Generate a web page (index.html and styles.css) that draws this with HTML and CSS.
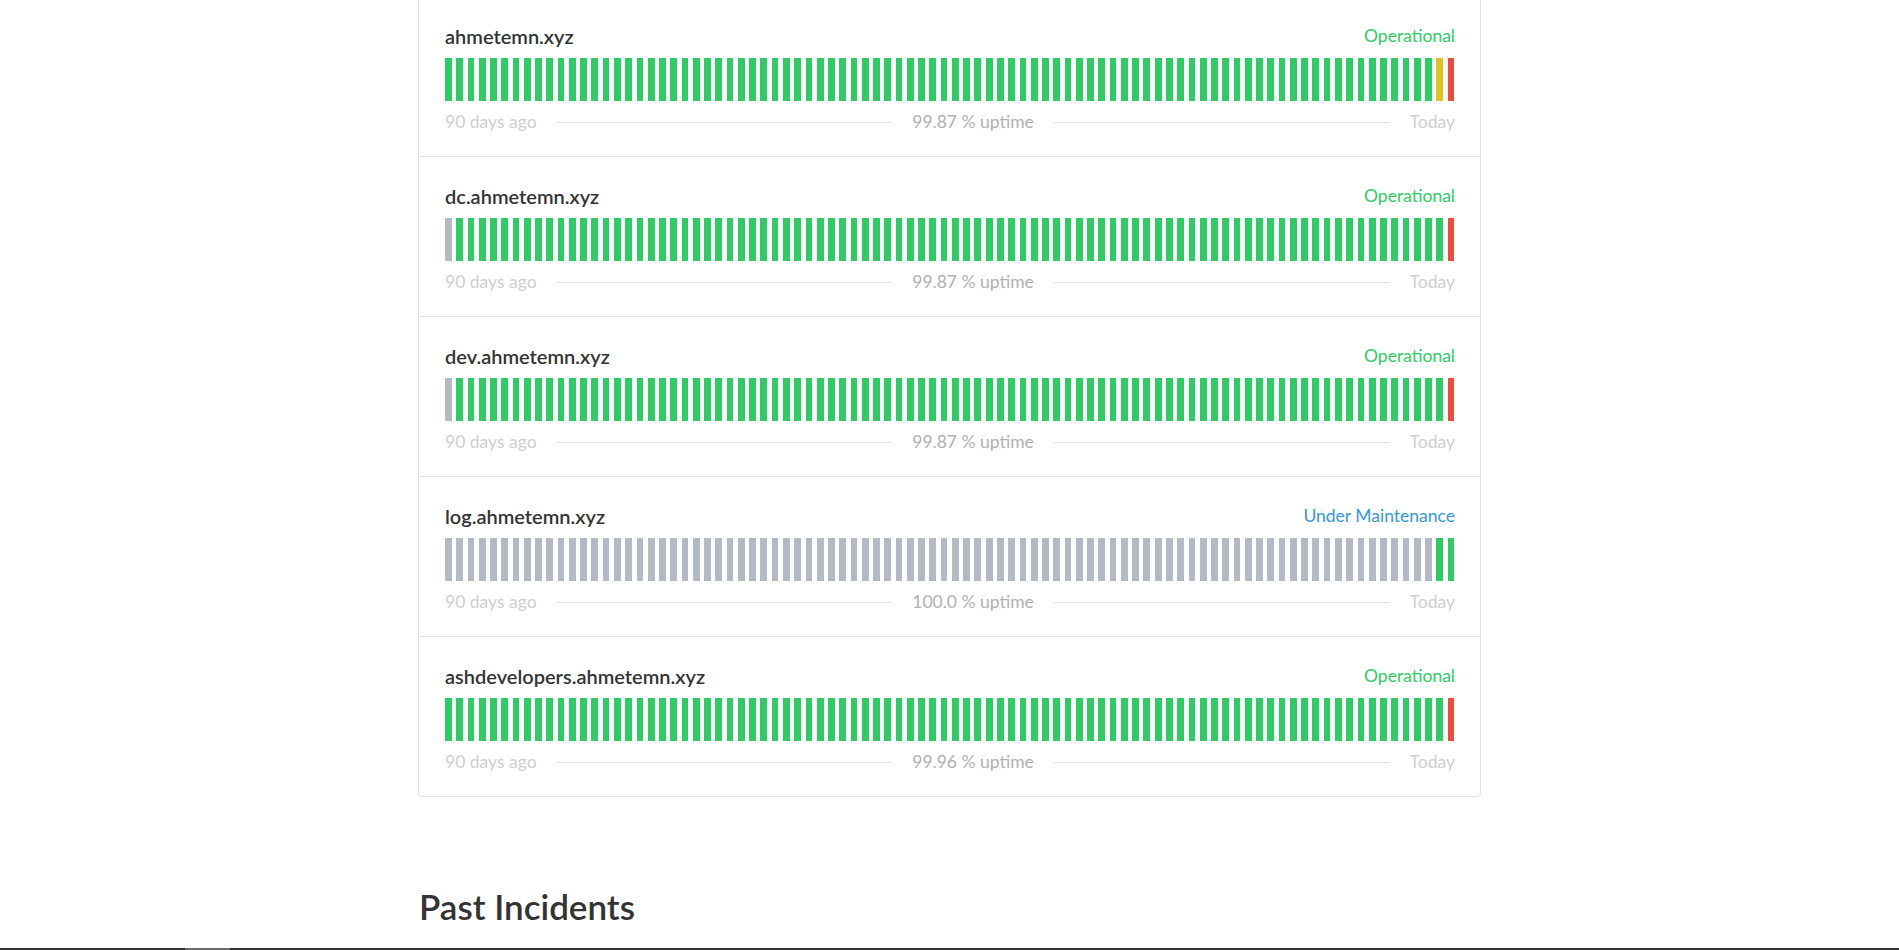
FILE: index.html
```html
<!DOCTYPE html>
<html lang="en">
<head>
<meta charset="utf-8">
<title>Status</title>
<link rel="stylesheet" href="styles.css">
</head>
<body>
<main class="page">
  <section class="components">
    <div class="component">
      <div class="head"><span class="name">ahmetemn.xyz</span><span class="status ok">Operational</span></div>
      <div class="bars">
        <i></i><i></i><i></i><i></i><i></i><i></i><i></i><i></i><i></i><i></i>
        <i></i><i></i><i></i><i></i><i></i><i></i><i></i><i></i><i></i><i></i>
        <i></i><i></i><i></i><i></i><i></i><i></i><i></i><i></i><i></i><i></i>
        <i></i><i></i><i></i><i></i><i></i><i></i><i></i><i></i><i></i><i></i>
        <i></i><i></i><i></i><i></i><i></i><i></i><i></i><i></i><i></i><i></i>
        <i></i><i></i><i></i><i></i><i></i><i></i><i></i><i></i><i></i><i></i>
        <i></i><i></i><i></i><i></i><i></i><i></i><i></i><i></i><i></i><i></i>
        <i></i><i></i><i></i><i></i><i></i><i></i><i></i><i></i><i></i><i></i>
        <i></i><i></i><i></i><i></i><i></i><i></i><i></i><i></i><i class="y"></i><i class="r"></i>
      </div>
      <div class="foot"><span>90 days ago</span><span class="rule"></span><span class="uptime">99.87 % uptime</span><span class="rule"></span><span>Today</span></div>
    </div>

    <div class="component">
      <div class="head"><span class="name">dc.ahmetemn.xyz</span><span class="status ok">Operational</span></div>
      <div class="bars">
        <i class="n"></i><i></i><i></i><i></i><i></i><i></i><i></i><i></i><i></i><i></i>
        <i></i><i></i><i></i><i></i><i></i><i></i><i></i><i></i><i></i><i></i>
        <i></i><i></i><i></i><i></i><i></i><i></i><i></i><i></i><i></i><i></i>
        <i></i><i></i><i></i><i></i><i></i><i></i><i></i><i></i><i></i><i></i>
        <i></i><i></i><i></i><i></i><i></i><i></i><i></i><i></i><i></i><i></i>
        <i></i><i></i><i></i><i></i><i></i><i></i><i></i><i></i><i></i><i></i>
        <i></i><i></i><i></i><i></i><i></i><i></i><i></i><i></i><i></i><i></i>
        <i></i><i></i><i></i><i></i><i></i><i></i><i></i><i></i><i></i><i></i>
        <i></i><i></i><i></i><i></i><i></i><i></i><i></i><i></i><i></i><i class="r"></i>
      </div>
      <div class="foot"><span>90 days ago</span><span class="rule"></span><span class="uptime">99.87 % uptime</span><span class="rule"></span><span>Today</span></div>
    </div>

    <div class="component">
      <div class="head"><span class="name">dev.ahmetemn.xyz</span><span class="status ok">Operational</span></div>
      <div class="bars">
        <i class="n"></i><i></i><i></i><i></i><i></i><i></i><i></i><i></i><i></i><i></i>
        <i></i><i></i><i></i><i></i><i></i><i></i><i></i><i></i><i></i><i></i>
        <i></i><i></i><i></i><i></i><i></i><i></i><i></i><i></i><i></i><i></i>
        <i></i><i></i><i></i><i></i><i></i><i></i><i></i><i></i><i></i><i></i>
        <i></i><i></i><i></i><i></i><i></i><i></i><i></i><i></i><i></i><i></i>
        <i></i><i></i><i></i><i></i><i></i><i></i><i></i><i></i><i></i><i></i>
        <i></i><i></i><i></i><i></i><i></i><i></i><i></i><i></i><i></i><i></i>
        <i></i><i></i><i></i><i></i><i></i><i></i><i></i><i></i><i></i><i></i>
        <i></i><i></i><i></i><i></i><i></i><i></i><i></i><i></i><i></i><i class="r"></i>
      </div>
      <div class="foot"><span>90 days ago</span><span class="rule"></span><span class="uptime">99.87 % uptime</span><span class="rule"></span><span>Today</span></div>
    </div>

    <div class="component">
      <div class="head"><span class="name">log.ahmetemn.xyz</span><span class="status maint">Under Maintenance</span></div>
      <div class="bars grey">
        <i></i><i></i><i></i><i></i><i></i><i></i><i></i><i></i><i></i><i></i>
        <i></i><i></i><i></i><i></i><i></i><i></i><i></i><i></i><i></i><i></i>
        <i></i><i></i><i></i><i></i><i></i><i></i><i></i><i></i><i></i><i></i>
        <i></i><i></i><i></i><i></i><i></i><i></i><i></i><i></i><i></i><i></i>
        <i></i><i></i><i></i><i></i><i></i><i></i><i></i><i></i><i></i><i></i>
        <i></i><i></i><i></i><i></i><i></i><i></i><i></i><i></i><i></i><i></i>
        <i></i><i></i><i></i><i></i><i></i><i></i><i></i><i></i><i></i><i></i>
        <i></i><i></i><i></i><i></i><i></i><i></i><i></i><i></i><i></i><i></i>
        <i></i><i></i><i></i><i></i><i></i><i></i><i></i><i></i><i class="g"></i><i class="g"></i>
      </div>
      <div class="foot"><span>90 days ago</span><span class="rule"></span><span class="uptime">100.0 % uptime</span><span class="rule"></span><span>Today</span></div>
    </div>

    <div class="component">
      <div class="head"><span class="name">ashdevelopers.ahmetemn.xyz</span><span class="status ok">Operational</span></div>
      <div class="bars">
        <i></i><i></i><i></i><i></i><i></i><i></i><i></i><i></i><i></i><i></i>
        <i></i><i></i><i></i><i></i><i></i><i></i><i></i><i></i><i></i><i></i>
        <i></i><i></i><i></i><i></i><i></i><i></i><i></i><i></i><i></i><i></i>
        <i></i><i></i><i></i><i></i><i></i><i></i><i></i><i></i><i></i><i></i>
        <i></i><i></i><i></i><i></i><i></i><i></i><i></i><i></i><i></i><i></i>
        <i></i><i></i><i></i><i></i><i></i><i></i><i></i><i></i><i></i><i></i>
        <i></i><i></i><i></i><i></i><i></i><i></i><i></i><i></i><i></i><i></i>
        <i></i><i></i><i></i><i></i><i></i><i></i><i></i><i></i><i></i><i></i>
        <i></i><i></i><i></i><i></i><i></i><i></i><i></i><i></i><i></i><i class="r"></i>
      </div>
      <div class="foot"><span>90 days ago</span><span class="rule"></span><span class="uptime">99.96 % uptime</span><span class="rule"></span><span>Today</span></div>
    </div>
  </section>

  <h2 class="section-title">Past Incidents</h2>
</main>
<div class="bottom-bar"><span class="thumb"></span></div>
</body>
</html>
```

FILE: styles.css
```css
html {
  overflow: hidden;
}

body {
  margin: 0;
  background: #ffffff;
  font-family: Lato, "Open Sans", Arial, sans-serif;
  color: #333333;
}

.page {
  width: 1063px;
  margin: -4px auto 0;
}

.components {
  border: 1px solid #e0e0e0;
  border-radius: 4px;
}

.component {
  padding: 27px 25px 23px 26px;
}

.component + .component {
  border-top: 1px solid #e0e0e0;
}

.head {
  display: flex;
  justify-content: space-between;
  align-items: baseline;
  height: 24px;
  line-height: 24px;
}

.name {
  font-size: 20px;
  font-weight: 600;
  color: #333333;
}

.status {
  font-size: 17.5px;
  position: relative;
  top: -2px;
}

.status.ok {
  color: #2fcc66;
}

.status.maint {
  color: #3498db;
}

.bars {
  display: flex;
  gap: 4.5px;
  height: 42.5px;
  margin-top: 10px;
}

.bars i {
  flex: 1 1 0;
  background: #2fcc66;
}

.bars.grey i {
  background: #b3bac5;
}

.bars i.n,
.bars.grey i.n {
  background: #b3bac5;
}

.bars i.g,
.bars.grey i.g {
  background: #2fcc66;
}

.bars i.r {
  background: #e74c3c;
}

.bars i.y {
  background: #dcc41e;
}

.foot {
  display: flex;
  align-items: center;
  margin-top: 9.5px;
  height: 24px;
  line-height: 24px;
  font-size: 17.5px;
  color: #cfcfcf;
}

.foot .uptime {
  color: #b0b0b0;
}

.foot .rule {
  flex: 1 1 auto;
  height: 1px;
  background: #e3e3e3;
  margin: 0 20px;
}

.component .foot {
  margin-bottom: -1px;
}

.section-title {
  margin: 90px 0 0 1px;
  font-size: 35px;
  line-height: 38px;
  font-weight: 600;
  color: #333333;
}

.bottom-bar {
  position: fixed;
  left: 0;
  right: 0;
  bottom: 0;
  height: 2px;
  background: #333333;
}

.bottom-bar .thumb {
  position: absolute;
  left: 185px;
  top: 0;
  width: 45px;
  height: 2px;
  background: #6a6a6a;
}
```
